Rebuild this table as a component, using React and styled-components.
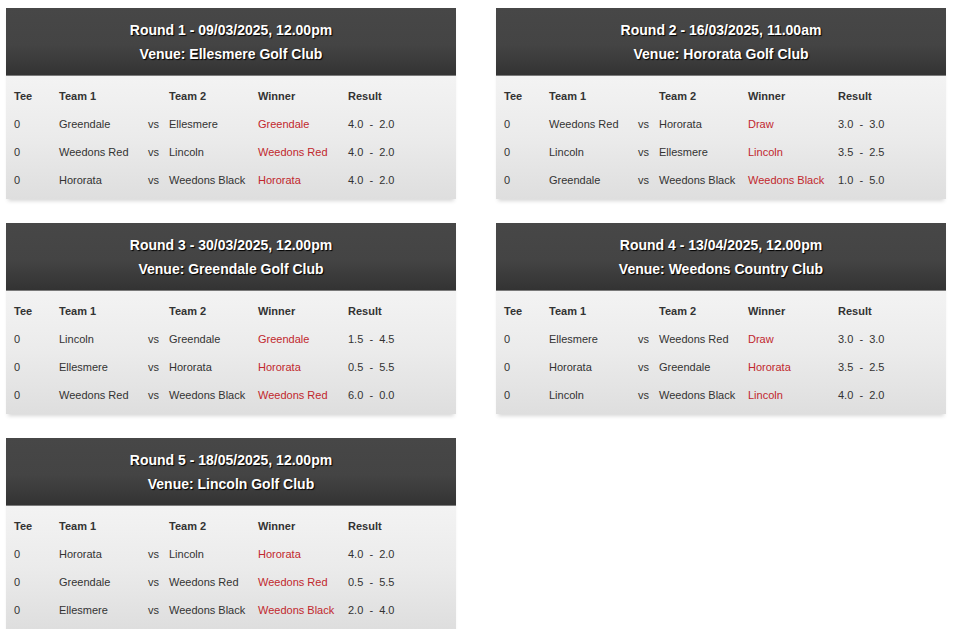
import styled, { createGlobalStyle } from "styled-components";

const GlobalStyle = createGlobalStyle`
  body {
    margin: 0;
    background: #fff;
    font-family: "Liberation Sans", Arial, sans-serif;
  }
`;

const rounds = [
  {
    title: "Round 1 - 09/03/2025, 12.00pm",
    venue: "Venue: Ellesmere Golf Club",
    games: [
      ["0", "Greendale", "Ellesmere", "Greendale", "4.0", "2.0"],
      ["0", "Weedons Red", "Lincoln", "Weedons Red", "4.0", "2.0"],
      ["0", "Hororata", "Weedons Black", "Hororata", "4.0", "2.0"],
    ],
  },
  {
    title: "Round 2 - 16/03/2025, 11.00am",
    venue: "Venue: Hororata Golf Club",
    games: [
      ["0", "Weedons Red", "Hororata", "Draw", "3.0", "3.0"],
      ["0", "Lincoln", "Ellesmere", "Lincoln", "3.5", "2.5"],
      ["0", "Greendale", "Weedons Black", "Weedons Black", "1.0", "5.0"],
    ],
  },
  {
    title: "Round 3 - 30/03/2025, 12.00pm",
    venue: "Venue: Greendale Golf Club",
    games: [
      ["0", "Lincoln", "Greendale", "Greendale", "1.5", "4.5"],
      ["0", "Ellesmere", "Hororata", "Hororata", "0.5", "5.5"],
      ["0", "Weedons Red", "Weedons Black", "Weedons Red", "6.0", "0.0"],
    ],
  },
  {
    title: "Round 4 - 13/04/2025, 12.00pm",
    venue: "Venue: Weedons Country Club",
    games: [
      ["0", "Ellesmere", "Weedons Red", "Draw", "3.0", "3.0"],
      ["0", "Hororata", "Greendale", "Hororata", "3.5", "2.5"],
      ["0", "Lincoln", "Weedons Black", "Lincoln", "4.0", "2.0"],
    ],
  },
  {
    title: "Round 5 - 18/05/2025, 12.00pm",
    venue: "Venue: Lincoln Golf Club",
    games: [
      ["0", "Hororata", "Lincoln", "Hororata", "4.0", "2.0"],
      ["0", "Greendale", "Weedons Red", "Weedons Red", "0.5", "5.5"],
      ["0", "Ellesmere", "Weedons Black", "Weedons Black", "2.0", "4.0"],
    ],
  },
];

const App = () => {
  return (
    <>
      <GlobalStyle />
      <Page>
        {rounds.map((r) => (
          <Card key={r.title}>
            <Header>
              <HeaderLine>{r.title}</HeaderLine>
              <HeaderLine>{r.venue}</HeaderLine>
            </Header>
            <Body>
              <Row $head>
                <span>Tee</span>
                <span>Team 1</span>
                <span />
                <span>Team 2</span>
                <span>Winner</span>
                <span>Result</span>
              </Row>
              {r.games.map((g, i) => (
                <Row key={i}>
                  <span>{g[0]}</span>
                  <span>{g[1]}</span>
                  <span>vs</span>
                  <span>{g[2]}</span>
                  <Winner>{g[3]}</Winner>
                  <span>
                    {g[4]}&nbsp;&nbsp;-&nbsp;&nbsp;{g[5]}
                  </span>
                </Row>
              ))}
            </Body>
          </Card>
        ))}
      </Page>
    </>
  );
};

export default App;

const Page = styled.div`
  display: grid;
  grid-template-columns: 450px 450px;
  column-gap: 40px;
  row-gap: 24px;
  padding: 8px 0 0 6px;
  align-items: start;
`;

const Card = styled.div`
  width: 450px;
  box-shadow: 0 4px 4px -2px rgba(0, 0, 0, 0.16);
`;

const Header = styled.div`
  background: linear-gradient(to bottom, #474747 0%, #444 55%, #333 100%);
  border-bottom: 1px solid #7a7a7a;
  padding: 10px 0 9px;
  text-align: center;
`;

const HeaderLine = styled.div`
  color: #fff;
  font-size: 14px;
  font-weight: bold;
  line-height: 24px;
  text-shadow: 1px 1px 1px #000;
`;

const Body = styled.div`
  background: linear-gradient(to bottom, #f3f3f3 0%, #ebebeb 50%, #dedede 100%);
  padding: 6px 0 5px 8px;
`;

const Row = styled.div`
  display: grid;
  grid-template-columns: 45px 89px 21px 89px 90px 1fr;
  height: 28px;
  align-items: center;
  font-size: 11px;
  color: #333;
  font-weight: ${(p) => (p.$head ? "bold" : "normal")};
  white-space: nowrap;
`;

const Winner = styled.span`
  color: #c1272d;
`;
